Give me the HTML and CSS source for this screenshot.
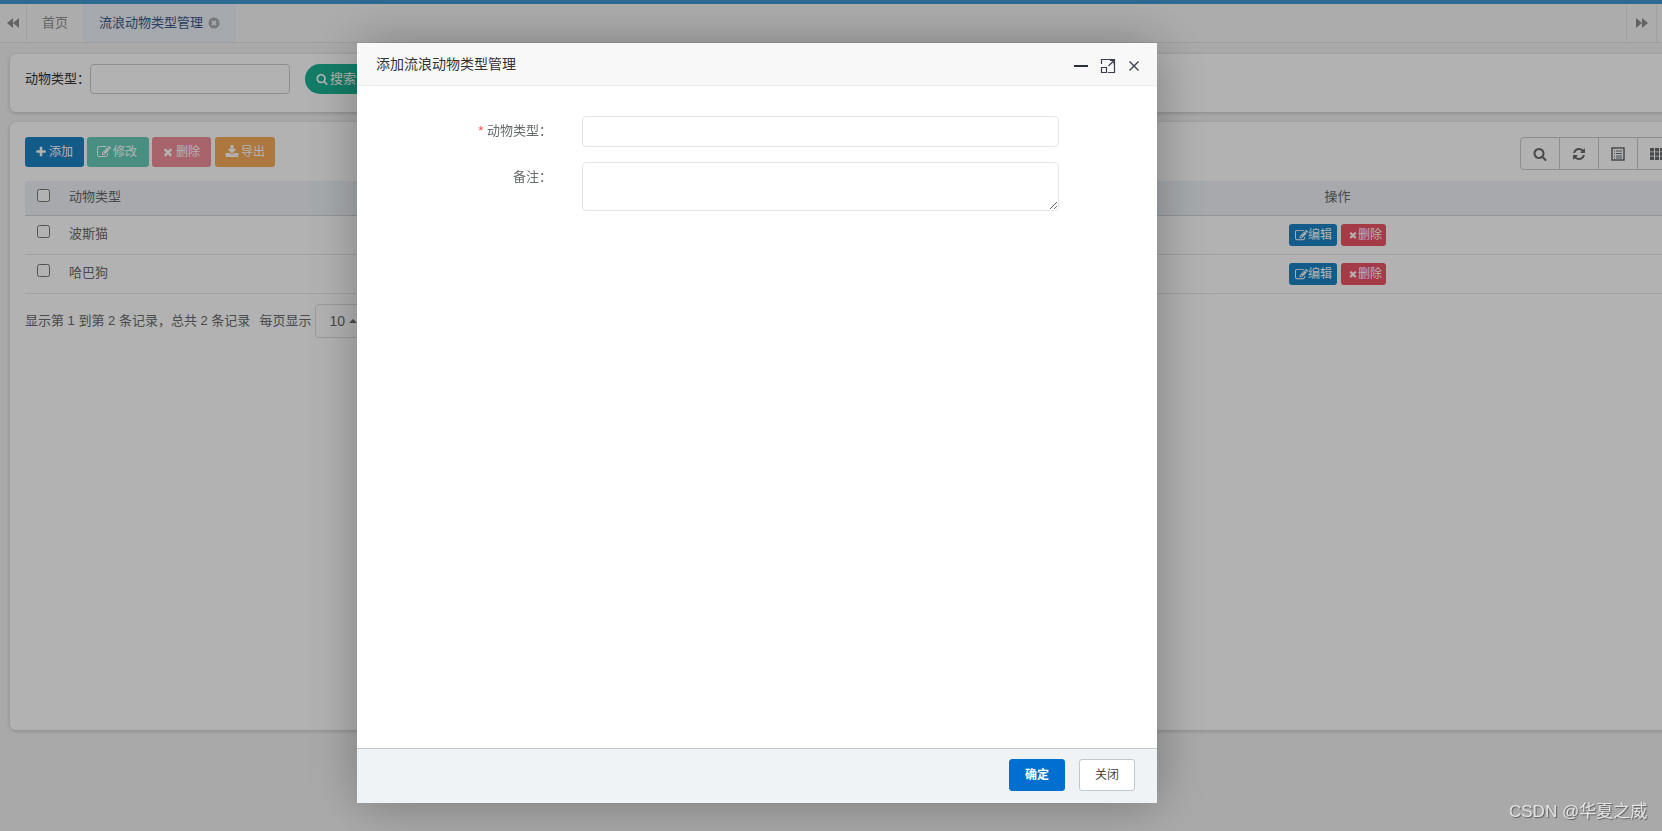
FILE: index.html
```html
<!DOCTYPE html>
<html lang="zh-CN">
<head>
<meta charset="utf-8">
<title>流浪动物类型管理</title>
<link rel="stylesheet" href="styles.css">
</head>
<body>
<svg class="defs" width="0" height="0" aria-hidden="true">
  <symbol id="i-search" viewBox="0 0 1792 1792"><path d="M1216 832q0-185-131.500-316.500t-316.500-131.500-316.500 131.500-131.500 316.500 131.500 316.500 316.500 131.500 316.500-131.500 131.500-316.500zm512 832q0 52-38 90t-90 38q-54 0-90-38l-343-342q-179 124-399 124-143 0-273.500-55.500t-225-150-150-225-55.500-273.500 55.500-273.500 150-225 225-150 273.500-55.500 273.500 55.500 225 150 150 225 55.500 273.500q0 220-124 399l343 343q37 37 37 90z"/></symbol>
  <symbol id="i-plus" viewBox="0 0 1792 1792"><path d="M1600 736v192q0 40-28 68t-68 28h-416v416q0 40-28 68t-68 28h-192q-40 0-68-28t-28-68v-416h-416q-40 0-68-28t-28-68v-192q0-40 28-68t68-28h416v-416q0-40 28-68t68-28h192q40 0 68 28t28 68v416h416q40 0 68 28t28 68z"/></symbol>
  <symbol id="i-times" viewBox="0 0 1792 1792"><path d="M1490 1322q0 40-28 68l-136 136q-28 28-68 28t-68-28l-294-294-294 294q-28 28-68 28t-68-28l-136-136q-28-28-28-68t28-68l294-294-294-294q-28-28-28-68t28-68l136-136q28-28 68-28t68 28l294 294 294-294q28-28 68-28t68 28l136 136q28 28 28 68t-28 68l-294 294 294 294q28 28 28 68z"/></symbol>
  <symbol id="i-edit" viewBox="0 0 1792 1792"><path d="M888 1184l116-116-152-152-116 116v56h96v96h56zm440-720q-16-16-33 1l-350 350q-17 17-1 33t33-1l350-350q17-17 1-33zm80 594v190q0 119-84.500 203.500t-203.500 84.500h-832q-119 0-203.500-84.500t-84.500-203.500v-832q0-119 84.500-203.500t203.500-84.500h832q63 0 117 25 15 7 18 23 3 17-9 29l-49 49q-14 14-32 8-23-6-45-6h-832q-66 0-113 47t-47 113v832q0 66 47 113t113 47h832q66 0 113-47t47-113v-126q0-13 9-22l64-64q15-15 35-7t20 29zm-96-738l288 288-672 672h-288v-288zm444 132l-92 92-288-288 92-92q28-28 68-28t68 28l152 152q28 28 28 68t-28 68z"/></symbol>
  <symbol id="i-download" viewBox="0 0 1792 1792"><path d="M1344 1344q0-26-19-45t-45-19-45 19-19 45 19 45 45 19 45-19 19-45zm256 0q0-26-19-45t-45-19-45 19-19 45 19 45 45 19 45-19 19-45zm128-224v320q0 40-28 68t-68 28h-1472q-40 0-68-28t-28-68v-320q0-40 28-68t68-28h465l135 136q58 56 136 56t136-56l136-136h464q40 0 68 28t28 68zm-325-569q17 41-14 70l-448 448q-18 19-45 19t-45-19l-448-448q-31-29-14-70 17-39 59-39h256v-448q0-26 19-45t45-19h256q26 0 45 19t19 45v448h256q42 0 59 39z"/></symbol>
  <symbol id="i-refresh" viewBox="0 0 1792 1792"><path d="M1639 1056q0 5-1 7-64 268-268 434.500t-478 166.500q-146 0-282.500-55t-243.500-157l-129 129q-19 19-45 19t-45-19-19-45v-448q0-26 19-45t45-19h448q26 0 45 19t19 45-19 45l-137 137q71 66 161 102t187 36q134 0 250-65t186-179q11-17 53-117 8-23 30-23h192q13 0 22.500 9.500t9.500 22.500zm25-800v448q0 26-19 45t-45 19h-448q-26 0-45-19t-19-45 19-45l138-138q-148-137-349-137-134 0-250 65t-186 179q-11 17-53 117-8 23-30 23h-199q-13 0-22.500-9.500t-9.500-22.500v-7q65-268 270-434.500t480-166.500q146 0 284 55.500t245 156.500l130-129q19-19 45-19t45 19 19 45z"/></symbol>
</svg>

<div class="topbar"></div>
<nav class="tabs">
  <span class="tab-arrow"><svg class="arrow" viewBox="0 0 13 12"><path d="M6 1v10L0 6zM12 1v10L6 6z"/></svg></span>
  <span class="tab tab-home">首页</span>
  <span class="tab tab-active">流浪动物类型管理<svg class="tab-close" viewBox="0 0 12 12"><circle cx="6" cy="6" r="5.500"/><path d="M4 4l4 4M8 4l-4 4"/></svg></span>
  <span class="tab-space"></span>
  <span class="tab-arrow tab-arrow-right"><svg class="arrow" viewBox="0 0 13 12"><path d="M1 1v10l6-5zM7 1v10l6-5z"/></svg></span>
</nav>

<main class="page">
  <section class="card search-card">
    <label class="search-label" for="q">动物类型&#xFF1A;</label>
    <input class="search-input" id="q" type="text">
    <button class="pill" type="button"><svg class="ico"><use href="#i-search"/></svg>搜索</button>
  </section>

  <section class="card table-card">
    <div class="toolbar">
      <div class="btn-group">
        <button class="btn btn-blue" type="button"><svg class="ico"><use href="#i-plus"/></svg>添加</button>
        <button class="btn btn-green btn-off" type="button"><svg class="ico ico-wide"><use href="#i-edit"/></svg>修改</button>
        <button class="btn btn-red btn-off" type="button"><svg class="ico"><use href="#i-times"/></svg>删除</button>
        <button class="btn btn-orange btn-last" type="button"><svg class="ico ico-wide"><use href="#i-download"/></svg>导出</button>
      </div>
      <div class="tools">
        <span class="tool"><svg class="tool-ico"><use href="#i-search"/></svg></span>
        <span class="tool"><svg class="tool-ico"><use href="#i-refresh"/></svg></span>
        <span class="tool"><svg class="tool-ico" viewBox="0 0 14 14"><path class="list-box" d="M1 1h12v12H1z"/><path class="list-lines" d="M3 4h1M5 4h6M3 6.500h1M5 6.500h6M3 9h1M5 9h6M3 11h1M5 11h6"/></svg></span>
        <span class="tool"><svg class="tool-ico" viewBox="0 0 14 14"><path d="M0 1h4v3.500H0zM5 1h4v3.500H5zM10 1h4v3.500h-4zM0 5.300h4v3.500H0zM5 5.300h4v3.500H5zM10 5.300h4v3.500h-4zM0 9.600h4v3.500H0zM5 9.600h4v3.500H5zM10 9.600h4v3.500h-4z"/></svg></span>
      </div>
    </div>

    <table class="grid">
      <colgroup><col class="col-check"><col class="col-type"><col class="col-ops"></colgroup>
      <thead>
        <tr><th><input class="check" type="checkbox"></th><th>动物类型</th><th class="center">操作</th></tr>
      </thead>
      <tbody>
        <tr>
          <td><input class="check" type="checkbox"></td><td>波斯猫</td>
          <td class="center"><span class="ops">
            <a class="mini mini-blue"><svg class="ico ico-wide"><use href="#i-edit"/></svg>编辑</a>
            <a class="mini mini-red"><svg class="ico ico-small"><use href="#i-times"/></svg>删除</a>
          </span></td>
        </tr>
        <tr>
          <td><input class="check" type="checkbox"></td><td>哈巴狗</td>
          <td class="center"><span class="ops">
            <a class="mini mini-blue"><svg class="ico ico-wide"><use href="#i-edit"/></svg>编辑</a>
            <a class="mini mini-red"><svg class="ico ico-small"><use href="#i-times"/></svg>删除</a>
          </span></td>
        </tr>
      </tbody>
    </table>

    <div class="pager">
      <span>显示第 1 到第 2 条记录&#xFF0C;总共 2 条记录</span>
      <span class="pager-size">每页显示</span>
      <span class="page-select">10<i class="caret"></i></span>
    </div>
  </section>
</main>

<div class="shade"></div>

<div class="modal" role="dialog">
  <header class="modal-head">
    <span class="modal-title">添加流浪动物类型管理</span>
    <span class="modal-ctrls">
      <svg class="ctrl" viewBox="0 0 16 16"><path class="ctrl-min" d="M1 8h14"/></svg>
      <svg class="ctrl" viewBox="0 0 16 16"><path d="M1.500 6V1.500h13v13H8M10 2.500h4v4M14 2.500L8.500 8"/><path d="M1.500 9.500h5v5h-5z"/></svg>
      <svg class="ctrl ctrl-x" viewBox="0 0 12 12"><path d="M1.500 1.500l9 9M10.500 1.500l-9 9"/></svg>
    </span>
  </header>
  <div class="modal-body">
    <div class="field">
      <label class="field-label"><em class="req">*</em> 动物类型&#xFF1A;</label>
      <input class="field-input" type="text">
    </div>
    <div class="field">
      <label class="field-label">备注&#xFF1A;</label>
      <textarea class="field-area"></textarea>
    </div>
  </div>
  <footer class="modal-foot">
    <button class="foot-btn foot-ok" type="button">确定</button>
    <button class="foot-btn foot-close" type="button">关闭</button>
  </footer>
</div>

<div class="mark">CSDN @华夏之威</div>
</body>
</html>
```

FILE: styles.css
```css
* { box-sizing: border-box; }
html, body { height: 100%; }
body {
  margin: 0;
  width: 1662px;
  height: 831px;
  overflow: hidden;
  background: #f3f3f4;
  color: #676a6c;
  font: 13px/18px "Liberation Sans", "Noto Sans CJK SC", sans-serif;
}
.defs { position: absolute; }
button { font: inherit; cursor: pointer; }

/* top */
.topbar { height: 4px; background: #3f98d2; }
.tabs {
  display: flex;
  height: 39px;
  background: #f7f7f7;
  border-bottom: 1px solid #e4e4e4;
}
.tab-arrow {
  width: 27px;
  display: flex;
  align-items: center;
  justify-content: center;
  border-right: 1px solid #e7e7e7;
}
.tab-arrow-right {
  width: 31px;
  margin-right: 5px;
  border-left: 1px solid #e7e7e7;
}
.arrow { width: 13px; height: 12px; fill: #8d8f91; }
.tab {
  display: flex;
  align-items: center;
  padding: 0 15px;
  color: #8e9092;
}
.tab-home { width: 56px; }
.tab-active { background: #edf1f6; color: #3a5a8e; width: 153px; padding-left: 16px; white-space: nowrap; }
.tab-close { width: 12px; height: 12px; margin-left: 5px; flex: none; }
.tab-close circle { fill: #a9abae; }
.tab-close path { stroke: #edf1f6; stroke-width: 1.800; fill: none; }
.tab-space { flex: 1; }

/* page */
.page { width: 1702px; padding: 11px 10px 0; }
.card {
  background: #fff;
  border-radius: 6px;
  box-shadow: 0 1px 4px rgba(0, 0, 0, .2);
}
.search-card {
  display: flex;
  align-items: flex-start;
  height: 58px;
  padding: 10px 15px;
}
.search-label { width: 65px; line-height: 30px; color: #333; white-space: nowrap; }
.search-input {
  width: 200px;
  height: 30px;
  border: 1px solid #ccc;
  border-radius: 4px;
  background: #fff;
}
.pill {
  width: 72px;
  height: 30px;
  margin-left: 15px;
  padding: 0 0 0 11px;
  display: flex;
  align-items: center;
  border: 0;
  border-radius: 15px;
  background: #1ab394;
  color: #fff;
}
.ico { width: 12px; height: 12px; margin-right: 2px; fill: currentColor; flex: none; }
.ico-wide { width: 14px; height: 14px; margin-right: 2px; }
.ico-small { width: 10px; height: 10px; margin-right: 0; }

.table-card {
  height: 608px;
  margin-top: 10px;
  padding: 15px;
}
.toolbar { display: flex; justify-content: space-between; height: 33px; }
.btn-group { display: flex; gap: 3px; align-items: flex-start; }
.btn {
  display: flex;
  align-items: center;
  height: 30px;
  padding: 0 10px;
  border: 0;
  border-radius: 3px;
  color: #fff;
  font-size: 12px;
  white-space: nowrap;
}
.btn-blue { background: #1c84c6; width: 59px; }
.btn-green { background: #1ab394; width: 62px; }
.btn-red { background: #ed5565; width: 59px; }
.btn-orange { background: #f8ac59; width: 60px; }
.btn-last { margin-left: 1px; }
.btn-off { opacity: .65; }
.tools { display: flex; border: 1px solid #ccc; border-radius: 4px 0 0 4px; height: 33px; }
.tool {
  width: 39px;
  display: flex;
  align-items: center;
  justify-content: center;
  border-left: 1px solid #ccc;
}
.tool:first-child { border-left: 0; width: 38px; }
.tool-ico { width: 14px; height: 14px; fill: #676a6c; }
.list-box { fill: none; stroke: #676a6c; stroke-width: 1.500; }
.list-lines { fill: none; stroke: #676a6c; stroke-width: 1; }

/* table */
.grid {
  width: 1652px;
  margin-top: 11px;
  table-layout: fixed;
  border-collapse: separate;
  border-spacing: 0;
}
.col-check { width: 33px; }
.col-type { width: 940px; }
.col-ops { width: 679px; }
.grid th {
  height: 35px;
  padding: 7px 0 0 11px;
  background: #eff3f7;
  border-bottom: 1px solid #d2d5d9;
  font-weight: 400;
  text-align: left;
  vertical-align: top;
}
.grid td {
  height: 39px;
  padding: 9px 0 0 11px;
  border-bottom: 1px solid #e7e7e7;
  vertical-align: top;
}
.grid th:first-child, .grid td:first-child { padding-left: 12px; }
.grid .center { text-align: center; padding-left: 0; }
.grid td.center { padding-top: 8px; }
.check { display: block; width: 13px; height: 13px; margin: 1px 0 0; }
.grid td .check { margin-top: 0; }
.ops { display: inline-flex; gap: 4px; }
.mini {
  display: flex;
  align-items: center;
  height: 22px;
  padding: 0 5px 0 6px;
  border-radius: 3px;
  color: #fff;
  font-size: 12px;
  white-space: nowrap;
}
.mini .ico-wide { width: 13px; height: 13px; margin-right: 0; }
.mini-blue { background: #1c84c6; }
.mini-red { background: #ed5565; padding: 0 4px 0 7px; }
.pager { display: flex; align-items: center; height: 34px; margin-top: 10px; }
.pager-size { margin-left: 9px; }
.page-select {
  display: flex;
  align-items: center;
  width: 60px;
  height: 34px;
  margin-left: 4px;
  padding-left: 13px;
  border: 1px solid #ddd;
  border-radius: 4px;
  font-size: 14px;
}
.caret {
  margin-left: 4px;
  border: 4px solid transparent;
  border-top: 0;
  border-bottom-color: #676a6c;
}

/* dialog */
.shade { position: fixed; inset: 0; background: rgba(0, 0, 0, .3); }
.modal {
  position: fixed;
  left: 357px;
  top: 43px;
  width: 800px;
  height: 760px;
  display: flex;
  flex-direction: column;
  background: #fff;
  box-shadow: 1px 1px 50px rgba(0, 0, 0, .3);
}
.modal-head {
  display: flex;
  align-items: center;
  justify-content: space-between;
  height: 43px;
  padding: 0 17px 0 19px;
  background: #f8f8f8;
  border-bottom: 1px solid #eee;
  color: #333;
  font-size: 14px;
}
.modal-title { line-height: 42px; }
.modal-ctrls { display: flex; align-items: center; gap: 11px; margin-top: 3px; }
.ctrl { width: 16px; height: 16px; fill: none; stroke: #3b3f4c; stroke-width: 1.200; }
.ctrl-min { stroke-width: 2; stroke: #2a2d3a; }
.ctrl-x { width: 12px; height: 12px; stroke-width: 1.400; margin-left: 1px; }
.modal-body { flex: 1; padding-top: 30px; }
.field { display: flex; align-items: flex-start; margin-bottom: 15px; }
.field-label {
  width: 195px;
  flex: none;
  line-height: 30px;
  text-align: right;
  color: #676a6c;
  white-space: nowrap;
}
.req { color: #ff4d4f; font-style: normal; }
.field-input, .field-area {
  display: block;
  width: 477px;
  margin-left: 30px;
  border: 1px solid #e5e6e7;
  border-radius: 4px;
  background: #fff;
}
.field-input { height: 31px; }
.field-area { height: 49px; }
.modal-foot {
  display: flex;
  align-items: flex-start;
  justify-content: flex-end;
  height: 55px;
  padding: 10px 22px 0 0;
  background: #f0f3f6;
  border-top: 1px solid #c4c7cb;
}
.foot-btn {
  height: 32px;
  border-radius: 3px;
  font-size: 12px;
}
.foot-ok {
  width: 56px;
  background: #0070d0;
  border: 1px solid #0070d0;
  color: #fff;
  font-weight: 700;
}
.foot-close {
  width: 56px;
  margin-left: 14px;
  background: #fff;
  border: 1px solid #c2c6cf;
  color: #444;
}
.mark {
  position: fixed;
  left: 1509px;
  top: 801px;
  color: #e4e4e4;
  font-size: 17px;
  line-height: 22px;
  text-shadow: 1px 1px 1px rgba(0, 0, 0, .45);
  white-space: nowrap;
}
```
